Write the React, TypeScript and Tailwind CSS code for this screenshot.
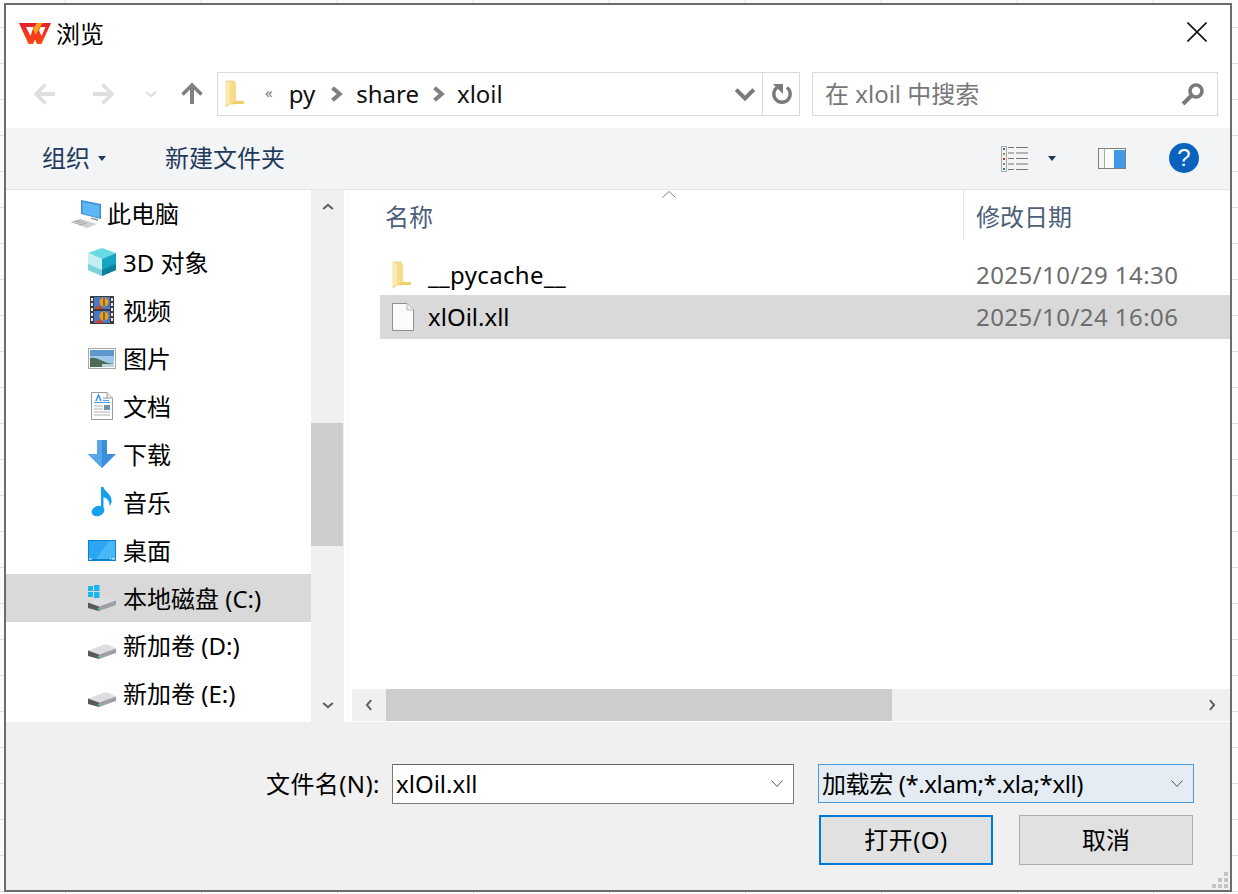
import React from "react";

const Folder = ({ className = "" }: { className?: string }) => (
  <svg className={className} width="20" height="28" viewBox="0 0 20 28">
    <path d="M1 1h8l1 2v21H5l-4 3z" fill="#f6dc8c" stroke="#e6c76c" strokeWidth="0.6" />
    <path d="M9 2h1v1h1v18h8v3H5.5L9 21z" fill="#f8dc80" />
    <path d="M10 3l0 18h9v3H6l4-3z" fill="#f3cf6c" />
    <path d="M1 1v25l4-3V3z" fill="#fbe9ad" />
  </svg>
);

const Chev = ({ d, className = "", w = 4, color = "#7a7a7a", size = 20 }: { d: string; className?: string; w?: number; color?: string; size?: number }) => (
  <svg className={className} width={size} height={size} viewBox="0 0 20 20" fill="none">
    <path d={d} stroke={color} strokeWidth={w} />
  </svg>
);

const Arrow = ({ color, dir }: { color: string; dir: "l" | "r" | "u" }) => {
  const rot = dir === "l" ? "rotate-[-90deg]" : dir === "r" ? "rotate-90" : "";
  return (
    <svg className={rot} width="24" height="24" viewBox="0 0 24 24" fill="none">
      <path d="M12 22V4" stroke={color} strokeWidth="4" />
      <path d="M2.5 12.5L12 3l9.5 9.5" stroke={color} strokeWidth="3.6" />
    </svg>
  );
};

const Drive = ({ win = false }: { win?: boolean }) => (
  <svg width="28" height="28" viewBox="0 0 28 28">
    {win && (
      <g fill="#19b6f0">
        <rect x="0" y="2" width="5" height="5" />
        <rect x="6" y="1" width="5.5" height="6" />
        <rect x="0" y="8" width="5" height="5" />
        <rect x="6" y="8" width="5.5" height="6" />
      </g>
    )}
    <path d="M0 18.5L18 12l10 4.5-17 6z" fill="#dcdee1" />
    <path d="M0 18.5l11 4v4.5l-11-3z" fill="#55595c" />
    <path d="M11 22.5l17-6v4.5l-17 6z" fill="#9da1a4" />
    <rect x="9.5" y="24" width="2.5" height="1.5" fill="#3ecb5f" />
  </svg>
);

const NavIcon: Record<string, React.ReactNode> = {
  cube: (
    <svg width="28" height="28" viewBox="0 0 28 28">
      <path d="M14 0l14 5-14 6L0 5z" fill="#67dbe4" />
      <path d="M0 5l14 6v17L0 22z" fill="#c3eef2" />
      <path d="M28 5L14 11v17l14-6z" fill="#16a3c4" />
      <path d="M14 28l14-6v-6l-14 6z" fill="#0f7f9c" />
      <path d="M0 22l14 6v-6L0 16z" fill="#7ad2de" />
    </svg>
  ),
  film: (
    <svg width="24" height="28" viewBox="0 0 24 28">
      <rect x="0" y="0" width="24" height="28" fill="#3c3c3c" />
      <rect x="4" y="1" width="16" height="12" fill="#4a78c8" />
      <rect x="4" y="15" width="16" height="12" fill="#4a78c8" />
      <circle cx="14" cy="6" r="4.5" fill="#e8a020" />
      <circle cx="14" cy="20" r="4.5" fill="#e8a020" />
      <path d="M4 13l5-4 5 4zM4 27l5-4 5 4z" fill="#c8482c" />
      <path d="M14 2v8M14 16v8" stroke="#333" strokeWidth="1" />
      <g fill="#e8e8e8">
        <rect x="1" y="2" width="2" height="3" /><rect x="1" y="7" width="2" height="3" /><rect x="1" y="12" width="2" height="3" /><rect x="1" y="17" width="2" height="3" /><rect x="1" y="22" width="2" height="3" />
        <rect x="21" y="2" width="2" height="3" /><rect x="21" y="7" width="2" height="3" /><rect x="21" y="12" width="2" height="3" /><rect x="21" y="17" width="2" height="3" /><rect x="21" y="22" width="2" height="3" />
      </g>
    </svg>
  ),
  pic: (
    <svg width="28" height="21" viewBox="0 0 28 21">
      <rect x="0.5" y="0.5" width="27" height="20" fill="#fff" stroke="#a8a8a8" />
      <rect x="2" y="2" width="24" height="17" fill="#9fc9e8" />
      <path d="M2 2h24v6H2z" fill="#5e98cc" />
      <path d="M2 10c7-1 11 3 18 5l6 1v3H2z" fill="#4d6b55" />
      <path d="M14 16h12v3H14z" fill="#b5d3dd" />
    </svg>
  ),
  doc: (
    <svg width="22" height="28" viewBox="0 0 22 28">
      <path d="M0.5 0.5H16L21.5 6v21.5H0.5z" fill="#fff" stroke="#9a9a9a" />
      <path d="M16 0.5V6h5.5" fill="#e8e8e8" stroke="#9a9a9a" />
      <path d="M5 9l2.5-6L10 9" stroke="#2a8ee0" strokeWidth="1.4" fill="none" />
      <path d="M3 10.5h16M12 6h4M12 8.5h6" stroke="#4aa0e4" strokeWidth="1" />
      <path d="M3 14h9M3 17h9M3 20h16M3 23h16" stroke="#b0b0b0" strokeWidth="1" />
      <rect x="13" y="13" width="6" height="5" fill="#6f93a8" />
    </svg>
  ),
  down: (
    <svg width="28" height="28" viewBox="0 0 28 28">
      <path d="M9 0h10v14h9L14 28 0 14h9z" fill="#3a8fdc" />
      <path d="M9 0h5v28L0 14h9z" fill="#58a6e8" />
    </svg>
  ),
  music: (
    <svg width="22" height="30" viewBox="0 0 22 30">
      <ellipse cx="7" cy="24" rx="6.5" ry="5" fill="#14a1ee" transform="rotate(-20 7 24)" />
      <path d="M10 0h2.5c1 5 9 7 8 15-.3 2-1 3-2 4 .5-6-3.5-8-6-9v14h-2.5z" fill="#14a1ee" />
    </svg>
  ),
  desk: (
    <svg width="28" height="21" viewBox="0 0 28 21">
      <rect width="28" height="21" fill="#0f7fcf" />
      <rect x="1" y="1" width="26" height="18" fill="#2aa6f2" />
      <path d="M8 19L21 1h6v18z" fill="#48b8f6" />
      <path d="M1 19h3M22 19h1M24 19h3" stroke="#fff" strokeWidth="1" />
    </svg>
  ),
};

const tree = [
  { k: "cube", t: "3D 对象" },
  { k: "film", t: "视频" },
  { k: "pic", t: "图片" },
  { k: "doc", t: "文档" },
  { k: "down", t: "下载" },
  { k: "music", t: "音乐" },
  { k: "desk", t: "桌面" },
];

const DropChev = () => (
  <svg width="12" height="8" viewBox="0 0 12 8" fill="none">
    <path d="M0.5 0.5L6 6.5l5.5-6" stroke="#555" strokeWidth="1" />
  </svg>
);

const Caret = ({ color = "#1f3a5c" }: { color?: string }) => (
  <svg width="8" height="5" viewBox="0 0 8 5">
    <path d="M0 0h8L4 5z" fill={color} />
  </svg>
);

export default function App() {
  return (
    <div className="w-[1238px] h-[894px] overflow-hidden pl-1 pt-[3px] bg-[#fbfbfb] bg-[linear-gradient(#dedede_1px,transparent_1px),linear-gradient(90deg,#dedede_1px,transparent_1px)] bg-[size:136px_36px] bg-[position:65px_27px] font-['Noto_Sans','Noto_Sans_CJK_SC',sans-serif] text-[24px] leading-none text-black">
      <div className="w-[1228px] h-[889px] border-2 border-[#6c6c6c] bg-white flex flex-col">
        {/* title */}
        <div className="h-[56px] shrink-0 flex items-center pl-[13px] pr-[23px]">
          <svg width="32" height="21" viewBox="0 0 32 21">
            <defs>
              <linearGradient id="wps" x1="0" y1="0" x2="0" y2="1">
                <stop offset="0" stopColor="#e8202c" />
                <stop offset="1" stopColor="#ff4a10" />
              </linearGradient>
            </defs>
            <path fillRule="evenodd" d="M0 0H32L22.5 21H18L16 16.5 14 21H9.5ZM7 4L11.5 13 14.5 4ZM21.5 4L20 7.5 22.5 13 26.5 4Z" fill="url(#wps)" />
            <path d="M18 0h5.5l-7 12-2.5-6z" fill="#ffa31a" />
          </svg>
          <span className="ml-[5px] text-[24px] font-['Noto_Sans_CJK_SC',sans-serif]">浏览</span>
          <svg className="ml-auto mb-[2px]" width="20" height="20" viewBox="0 0 20 20" fill="none">
            <path d="M0.5 0.5l19 19M19.5 0.5l-19 19" stroke="#111" strokeWidth="1.6" />
          </svg>
        </div>

        {/* nav */}
        <div className="h-[67px] shrink-0 flex items-start pt-[11px] text-[#111]">
          <div className="flex items-center h-[44px] w-[211px] shrink-0 pl-[27px]">
            <Arrow color="#dfdfdf" dir="l" />
            <div className="ml-[34px]"><Arrow color="#dfdfdf" dir="r" /></div>
            <Chev className="ml-[29px]" size={14} w={3} color="#dfdfdf" d="M3 7l7 6 7-6" />
            <div className="ml-[22px]"><Arrow color="#808080" dir="u" /></div>
          </div>
          <div className="w-[583px] h-[44px] border-[#d9d9d9] flex items-center shrink-0 [border-width:1.5px]">
            <Folder className="ml-[7px]" />
            <span className="ml-[20px] text-[15px] text-[#777] mb-1">«</span>
            <span className="ml-[16px]">py</span>
            <Chev className="ml-[13px]" size={18} w={4.6} color="#808080" d="M5 3l8 7-8 7" />
            <span className="ml-[10px]">share</span>
            <Chev className="ml-[11px]" size={18} w={4.6} color="#808080" d="M5 3l8 7-8 7" />
            <span className="ml-[9px]">xloil</span>
            <Chev className="ml-auto mr-[6px]" size={22} w={3.6} d="M2 6l8 8 8-8" />
            <div className="w-[37px] h-full border-l-[1.5px] border-[#d9d9d9] flex items-center justify-center">
              <svg width="24" height="24" viewBox="0 0 24 24" fill="none">
                <path d="M8 5.5a8.2 8.2 0 1 0 10 0" stroke="#7a7a7a" strokeWidth="3.4" />
                <path d="M4 2h10v10z" fill="#7a7a7a" />
              </svg>
            </div>
          </div>
          <div className="ml-[12px] w-[406px] h-[44px] border-[#d9d9d9] [border-width:1.5px] flex items-center pl-[12px] pr-[12px] text-[#777]">
            <span>在 xloil 中搜索</span>
            <svg className="ml-auto" width="24" height="24" viewBox="0 0 24 24" fill="none">
              <circle cx="15" cy="9" r="6" stroke="#7a7a7a" strokeWidth="3.6" />
              <path d="M10 14L2 22" stroke="#7a7a7a" strokeWidth="4" />
            </svg>
          </div>
        </div>

        {/* toolbar */}
        <div className="h-[62px] shrink-0 bg-[#f3f4f6] border-b border-[#e4e6e9] flex items-center pl-[36px] text-[#1f3a5c]">
          <span className="mt-[-1px]">组织</span>
          <div className="ml-[8px]"><Caret /></div>
          <span className="ml-[59px] mt-[-1px]">新建文件夹</span>
          <svg className="ml-auto" width="28" height="26" viewBox="0 0 28 26" fill="none">
            <rect x="0.5" y="0.5" width="5" height="25" fill="#f3f4f6" stroke="#aaa" />
            <rect x="2" y="2" width="2" height="2" fill="#2a7a8a" /><rect x="2" y="7" width="2" height="2" fill="#9a9a20" /><rect x="2" y="12" width="2" height="2" fill="#b83a1a" /><rect x="2" y="17" width="2" height="2" fill="#888" /><rect x="2" y="22" width="2" height="2" fill="#2a7a8a" />
            <path d="M7 1.5h6M15 1.5h12M7 7h6M15 7h12M7 12.5h6M15 12.5h12M7 18h6M15 18h12M7 23.5h6M15 23.5h12" stroke="#777" strokeWidth="1" />
          </svg>
          <div className="ml-[19px]"><Caret /></div>
          <svg className="ml-[42px]" width="28" height="21" viewBox="0 0 28 21">
            <rect x="0.5" y="0.5" width="27" height="20" fill="#fff" stroke="#808080" />
            <rect x="1" y="1" width="5" height="19" fill="#f3f4f6" />
            <path d="M6.5 1v19" stroke="#aaa" />
            <rect x="16" y="2" width="11" height="18" fill="#3f9ae6" />
          </svg>
          <div className="ml-[43px] mr-[31px] mb-[2px] w-[30px] h-[30px] rounded-full bg-[#0a62bd] flex items-center justify-center text-white text-[24px] font-['Liberation_Sans',sans-serif]">?</div>
        </div>

        {/* main */}
        <div className="h-[532px] shrink-0 flex bg-white">
          <div className="w-[305px] shrink-0 flex flex-col overflow-hidden">
            <div className="h-[48px] shrink-0 flex items-center pl-[64px]">
              <svg width="33" height="28" viewBox="0 0 33 28">
                <path d="M11 0l20 4v15l-20-5z" fill="#3f8fd8" />
                <path d="M12.5 2l17 3.5v12l-17-4z" fill="#5cb8f4" />
                <path d="M21 17.5l7 1.5v2l-7-2z" fill="#9a9a9a" />
                <path d="M0 22l11-3 16 5-10 4z" fill="#cfcfcf" />
                <path d="M3 22l8-2M6 23.5l8-2M9 25l8-2" stroke="#999" strokeWidth="0.8" />
              </svg>
              <span className="ml-[4px]">此电脑</span>
            </div>
            {tree.map((r) => (
              <div key={r.t} className="h-[48px] shrink-0 flex items-center">
                <div className="w-[117px] shrink-0 flex justify-center pl-[82px] pr-[7px]">{NavIcon[r.k]}</div>
                <span className="mt-[2px]">{r.t}</span>
              </div>
            ))}
            <div className="h-[48px] shrink-0 flex items-center bg-[#d9d9d9] pl-[82px]">
              <Drive win />
              <span className="ml-[7px] mt-[2px]">本地磁盘 (C:)</span>
            </div>
            <div className="h-[48px] shrink-0 flex items-center pl-[82px]">
              <Drive />
              <span className="ml-[7px]">新加卷 (D:)</span>
            </div>
            <div className="h-[48px] shrink-0 flex items-center pl-[82px]">
              <Drive />
              <span className="ml-[7px]">新加卷 (E:)</span>
            </div>
          </div>

          {/* v scrollbar */}
          <div className="w-[33px] shrink-0 bg-[#f0f0f0] flex flex-col">
            <div className="h-[34px] flex items-center justify-center">
              <Chev size={14} w={2.8} color="#606060" d="M3 13l7-6 7 6" />
            </div>
            <div className="mt-[199px] h-[123px] w-[32px] bg-[#cdcdcd]" />
            <div className="flex-1" />
            <div className="h-[34px] flex items-center justify-center">
              <Chev size={14} w={2.8} color="#606060" d="M3 7l7 6 7-6" />
            </div>
          </div>

          {/* file pane */}
          <div className="flex-1 min-w-0 flex flex-col pl-[3px]">
            <div className="flex-1 flex flex-col border-l-2 border-[#fafafa] min-h-0">
              <div className="h-[50px] shrink-0 flex text-[#4c607a] relative">
                <svg className="absolute left-[313px] top-[1px]" width="14" height="7" viewBox="0 0 14 7" fill="none">
                  <path d="M0.5 6.5L7 0.5l6.5 6" stroke="#808080" strokeWidth="1" />
                </svg>
                <div className="w-[615px] shrink-0 pl-[36px] flex items-center border-r border-[#e4e6e9] pt-[4px]">名称</div>
                <div className="pl-[12px] flex items-center pt-[4px]">修改日期</div>
              </div>
              <div className="h-[15px] shrink-0" />
              <div className="h-[40px] shrink-0 flex items-center ml-[31px] pl-[12px]">
                <Folder />
                <span className="ml-[16px] w-[548px] shrink-0 tracking-[0.36px]">__pycache__</span>
                <span className="text-[#6d6d6d] tracking-[0.45px]">2025/10/29 14:30</span>
              </div>
              <div className="h-[44px] shrink-0 flex items-center ml-[31px] pl-[12px] bg-[#d9d9d9]">
                <svg width="22" height="28" viewBox="0 0 22 28">
                  <path d="M0.5 0.5H15L21.5 7v20.5H0.5z" fill="#fbfbfb" stroke="#8f8f8f" />
                  <path d="M15 0.5V7h6.5" fill="#f0f0f0" stroke="#b5b5b5" />
                </svg>
                <span className="ml-[14px] w-[548px] shrink-0">xlOil.xll</span>
                <span className="text-[#6d6d6d] tracking-[0.45px]">2025/10/24 16:06</span>
              </div>
              <div className="flex-1" />
              <div className="h-[32px] shrink-0 ml-[3px] bg-[#f0f0f0] flex items-center">
                <div className="w-[34px] flex justify-center">
                  <Chev size={14} w={2.8} color="#606060" d="M13 3l-6 7 6 7" />
                </div>
                <div className="h-full w-[506px] bg-[#cdcdcd]" />
                <Chev className="ml-auto mr-[11px]" size={14} w={2.8} color="#606060" d="M7 3l6 7-6 7" />
              </div>
              <div className="h-[1px] shrink-0" />
            </div>
          </div>
        </div>

        {/* bottom */}
        <div className="flex-1 bg-[#f0f0f0] flex flex-col relative">
          <div className="flex items-start mt-[42px] h-[40px]">
            <span className="ml-[260px] h-[40px] flex items-center w-[126px] shrink-0 tracking-[0.4px]">文件名(N):</span>
            <div className="w-[402px] h-[40px] shrink-0 bg-white border border-[#7a7a7a] border-t-[#666] flex items-center pl-[3px] pr-[10px]">
              <span>xlOil.xll</span>
              <div className="ml-auto"><DropChev /></div>
            </div>
            <div className="ml-[24px] w-[376px] h-[39px] shrink-0 bg-[#e5ecf3] border border-[#4a9cd8] flex items-center pl-[3px] pr-[10px]">
              <span className="tracking-[-0.4px]">加载宏 (*.xlam;*.xla;*xll)</span>
              <div className="ml-auto"><DropChev /></div>
            </div>
          </div>
          <div className="flex mt-[11px] pl-[813px]">
            <div className="w-[174px] h-[50px] bg-[#e1e1e1] border-2 border-[#0078d7] flex items-center justify-center tracking-[0.5px]">打开(O)</div>
            <div className="ml-[26px] w-[174px] h-[50px] bg-[#e1e1e1] border border-[#adadad] flex items-center justify-center">取消</div>
          </div>
          <svg className="absolute right-[2px] bottom-[2px]" width="16" height="16" viewBox="0 0 16 16" fill="#c4c4c4">
            <rect x="12" y="0" width="4" height="4" />
            <rect x="6" y="6" width="4" height="4" />
            <rect x="12" y="6" width="4" height="4" />
            <rect x="0" y="12" width="4" height="4" />
            <rect x="6" y="12" width="4" height="4" />
            <rect x="12" y="12" width="4" height="4" />
          </svg>
        </div>
      </div>
    </div>
  );
}
